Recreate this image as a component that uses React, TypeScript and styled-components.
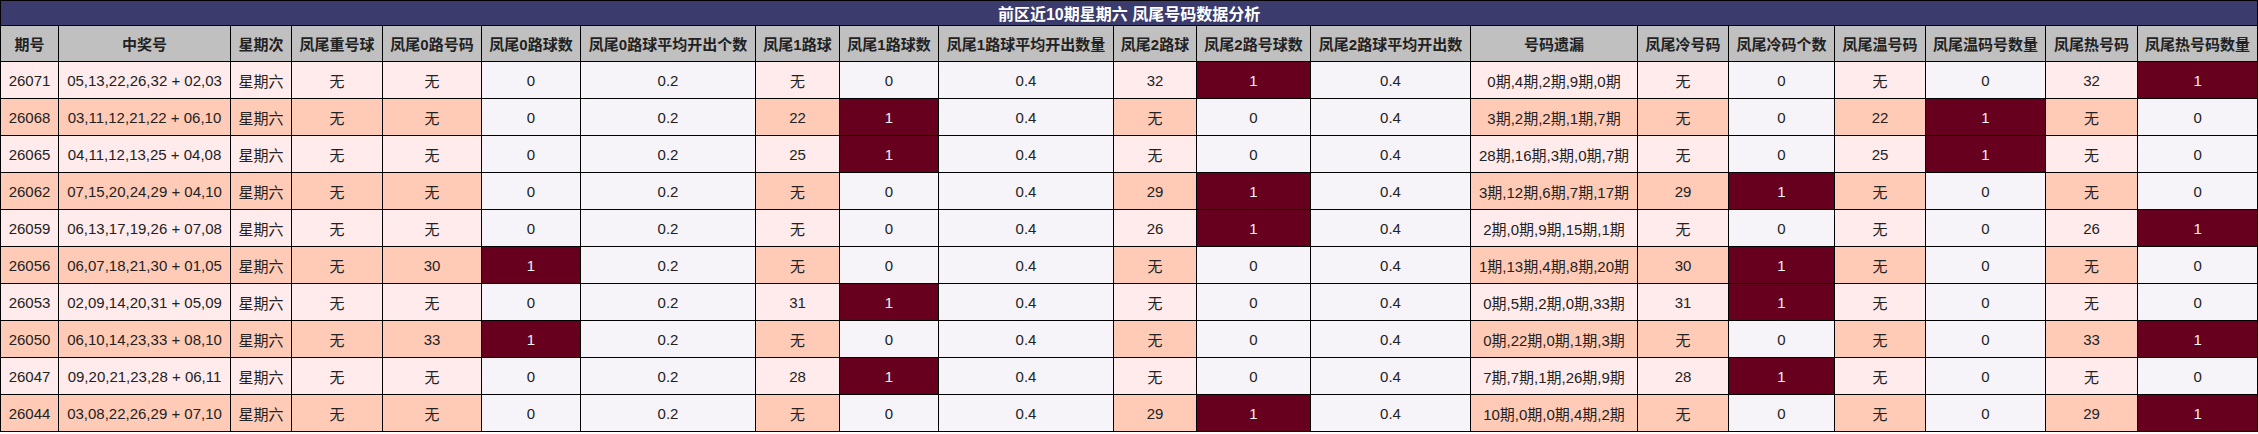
import React from "react";
import styled, { createGlobalStyle } from "styled-components";

type Tone = "pink" | "salmon" | "plain" | "hit";

const GlobalStyle = createGlobalStyle`
  body {
    margin: 0;
    background: #ffffff;
    font-family: "Liberation Sans", Arial, "Noto Sans CJK SC", sans-serif;
  }
`;

const columns: { title: string; width: number }[] = [
  { title: "期号", width: 58 },
  { title: "中奖号", width: 172 },
  { title: "星期次", width: 61 },
  { title: "凤尾重号球", width: 91 },
  { title: "凤尾0路号码", width: 99 },
  { title: "凤尾0路球数", width: 99 },
  { title: "凤尾0路球平均开出个数", width: 175 },
  { title: "凤尾1路球", width: 84 },
  { title: "凤尾1路球数", width: 99 },
  { title: "凤尾1路球平均开出数量", width: 175 },
  { title: "凤尾2路球", width: 83 },
  { title: "凤尾2路号球数", width: 114 },
  { title: "凤尾2路球平均开出数", width: 160 },
  { title: "号码遗漏", width: 167 },
  { title: "凤尾冷号码", width: 91 },
  { title: "凤尾冷码个数", width: 106 },
  { title: "凤尾温号码", width: 91 },
  { title: "凤尾温码号数量", width: 120 },
  { title: "凤尾热号码", width: 92 },
  { title: "凤尾热号码数量", width: 120 },
];

// columns that hold a count (lavender, maroon when 1)
const countCols = [5, 8, 11, 15, 17, 19];
// average columns (always lavender)
const avgCols = [6, 9, 12];

const rows: string[][] = [
  ["26071", "05,13,22,26,32 + 02,03", "星期六", "无", "无", "0", "0.2", "无", "0", "0.4", "32", "1", "0.4", "0期,4期,2期,9期,0期", "无", "0", "无", "0", "32", "1"],
  ["26068", "03,11,12,21,22 + 06,10", "星期六", "无", "无", "0", "0.2", "22", "1", "0.4", "无", "0", "0.4", "3期,2期,2期,1期,7期", "无", "0", "22", "1", "无", "0"],
  ["26065", "04,11,12,13,25 + 04,08", "星期六", "无", "无", "0", "0.2", "25", "1", "0.4", "无", "0", "0.4", "28期,16期,3期,0期,7期", "无", "0", "25", "1", "无", "0"],
  ["26062", "07,15,20,24,29 + 04,10", "星期六", "无", "无", "0", "0.2", "无", "0", "0.4", "29", "1", "0.4", "3期,12期,6期,7期,17期", "29", "1", "无", "0", "无", "0"],
  ["26059", "06,13,17,19,26 + 07,08", "星期六", "无", "无", "0", "0.2", "无", "0", "0.4", "26", "1", "0.4", "2期,0期,9期,15期,1期", "无", "0", "无", "0", "26", "1"],
  ["26056", "06,07,18,21,30 + 01,05", "星期六", "无", "30", "1", "0.2", "无", "0", "0.4", "无", "0", "0.4", "1期,13期,4期,8期,20期", "30", "1", "无", "0", "无", "0"],
  ["26053", "02,09,14,20,31 + 05,09", "星期六", "无", "无", "0", "0.2", "31", "1", "0.4", "无", "0", "0.4", "0期,5期,2期,0期,33期", "31", "1", "无", "0", "无", "0"],
  ["26050", "06,10,14,23,33 + 08,10", "星期六", "无", "33", "1", "0.2", "无", "0", "0.4", "无", "0", "0.4", "0期,22期,0期,1期,3期", "无", "0", "无", "0", "33", "1"],
  ["26047", "09,20,21,23,28 + 06,11", "星期六", "无", "无", "0", "0.2", "28", "1", "0.4", "无", "0", "0.4", "7期,7期,1期,26期,9期", "28", "1", "无", "0", "无", "0"],
  ["26044", "03,08,22,26,29 + 07,10", "星期六", "无", "无", "0", "0.2", "无", "0", "0.4", "29", "1", "0.4", "10期,0期,0期,4期,2期", "无", "0", "无", "0", "29", "1"],
];

const toneFor = (col: number, row: number, value: string): Tone => {
  if (countCols.includes(col)) return value === "1" ? "hit" : "plain";
  if (avgCols.includes(col)) return "plain";
  return row % 2 === 0 ? "pink" : "salmon";
};

const backgrounds: Record<Tone, string> = {
  pink: "#ffebec",
  salmon: "#ffcbb6",
  plain: "#f6f4f9",
  hit: "#67001f",
};

const Table = styled.table`
  width: 2258px;
  border-collapse: collapse;
  table-layout: fixed;
  font-size: 15px;
  color: #222;
`;

const Col = styled.col<{ $width: number }>`
  width: ${(p) => p.$width}px;
`;

const TitleCell = styled.th`
  height: 24px;
  padding: 0;
  background: #3c3b6e;
  color: #ffffff;
  font-weight: bold;
  font-size: 16px;
  text-align: center;
  border: 1px solid #000;
`;

const HeadCell = styled.th`
  height: 35px;
  padding: 0;
  background: #c0c0c0;
  color: #222;
  font-weight: bold;
  text-align: center;
  white-space: nowrap;
  border: 1px solid #000;
`;

const Cell = styled.td<{ $tone: Tone }>`
  height: 36px;
  padding: 0;
  text-align: center;
  white-space: nowrap;
  border: 1px solid #000;
  background: ${(p) => backgrounds[p.$tone]};
  color: ${(p) => (p.$tone === "hit" ? "#f2f2f2" : "#222")};
`;

export default function App() {
  return (
    <>
      <GlobalStyle />
      <Table>
        <colgroup>
          {columns.map((c) => (
            <Col key={c.title} $width={c.width} />
          ))}
        </colgroup>
        <thead>
          <tr>
            <TitleCell colSpan={columns.length}>
              前区近10期星期六 凤尾号码数据分析
            </TitleCell>
          </tr>
          <tr>
            {columns.map((c) => (
              <HeadCell key={c.title}>{c.title}</HeadCell>
            ))}
          </tr>
        </thead>
        <tbody>
          {rows.map((r, ri) => (
            <tr key={r[0]}>
              {r.map((v, ci) => (
                <Cell key={ci} $tone={toneFor(ci, ri, v)}>
                  {v}
                </Cell>
              ))}
            </tr>
          ))}
        </tbody>
      </Table>
    </>
  );
}
